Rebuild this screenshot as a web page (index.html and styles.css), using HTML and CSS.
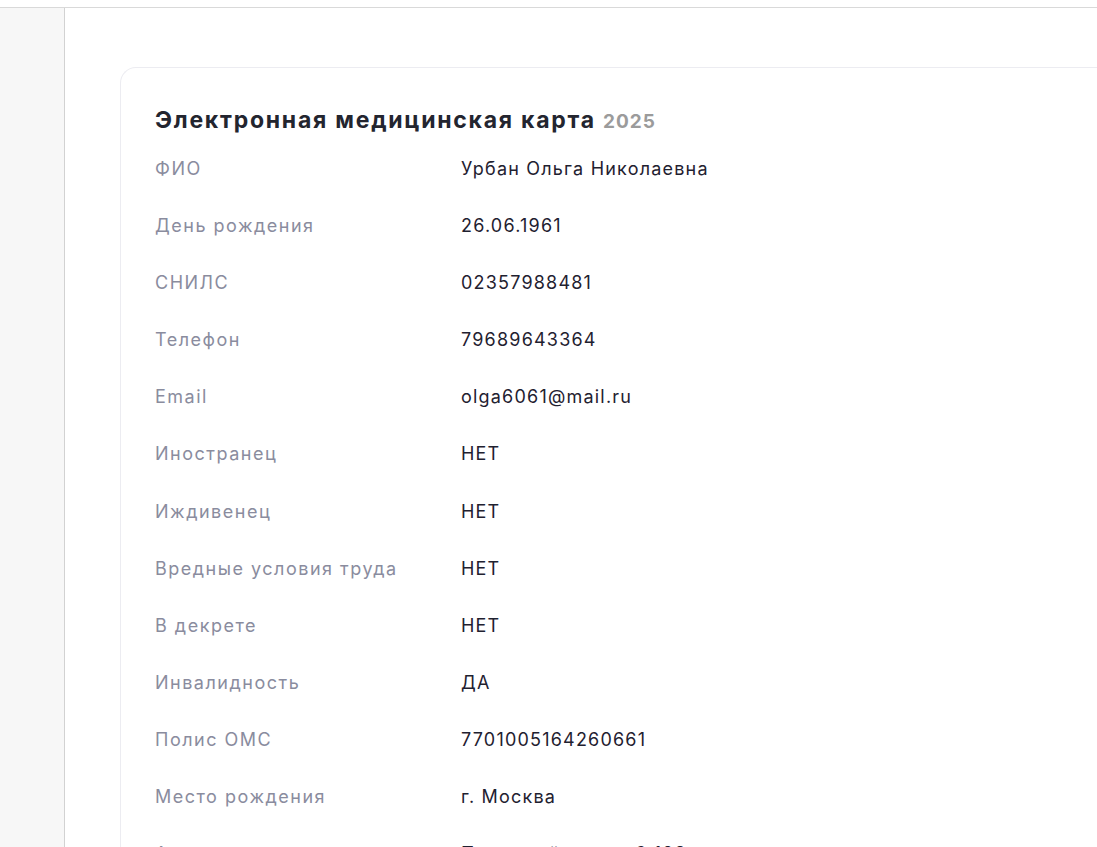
FILE: index.html
```html
<!DOCTYPE html>
<html lang="ru">
<head>
<meta charset="utf-8">
<title>Электронная медицинская карта</title>
<link rel="stylesheet" href="styles.css">
</head>
<body>
<header class="topbar"></header>
<div class="layout">
  <aside class="sidebar"></aside>
  <main class="main">
    <section class="card">
      <h1 class="card-title">Электронная медицинская карта <span class="year">2025</span></h1>
      <dl class="fields">
        <div class="row"><dt>ФИО</dt><dd>Урбан Ольга Николаевна</dd></div>
        <div class="row"><dt>День рождения</dt><dd>26.06.1961</dd></div>
        <div class="row"><dt>СНИЛС</dt><dd>02357988481</dd></div>
        <div class="row"><dt>Телефон</dt><dd>79689643364</dd></div>
        <div class="row"><dt>Email</dt><dd>olga6061@mail.ru</dd></div>
        <div class="row"><dt>Иностранец</dt><dd>НЕТ</dd></div>
        <div class="row"><dt>Иждивенец</dt><dd>НЕТ</dd></div>
        <div class="row"><dt>Вредные условия труда</dt><dd>НЕТ</dd></div>
        <div class="row"><dt>В декрете</dt><dd>НЕТ</dd></div>
        <div class="row"><dt>Инвалидность</dt><dd>ДА</dd></div>
        <div class="row"><dt>Полис ОМС</dt><dd>7701005164260661</dd></div>
        <div class="row"><dt>Место рождения</dt><dd>г. Москва</dd></div>
        <div class="row"><dt>Адрес</dt><dd>Полярный пр., д. 6 128</dd></div>
      </dl>
    </section>
  </main>
</div>
</body>
</html>
```

FILE: styles.css
```css
html, body {
  margin: 0;
  padding: 0;
  background: #ffffff;
  font-family: Inter, "Noto Sans", sans-serif;
  overflow: hidden;
}

.topbar {
  height: 7px;
  border-bottom: 1px solid #d9d9d9;
  background: #ffffff;
}

.layout {
  display: flex;
  min-height: 900px;
}

.sidebar {
  width: 64px;
  flex: 0 0 64px;
  background: #f7f7f7;
  border-right: 1px solid #d2d2d2;
}

.main {
  flex: 1;
  padding: 59px 0 0 55px;
  min-width: 0;
}

.card {
  border: 1px solid #ececf1;
  border-right: none;
  border-radius: 16px 0 0 0;
  padding: 37px 0 0 34px;
  margin-right: -20px;
}

.card-title {
  margin: 0;
  font-size: 23px;
  line-height: 30px;
  font-weight: 700;
  color: #23252f;
  letter-spacing: 1.75px;
  white-space: nowrap;
}

.year {
  color: #9b9b9b;
  font-size: 19px;
  letter-spacing: 1px;
}

.fields {
  margin: 20px 0 0 0;
}

.row {
  display: grid;
  grid-template-columns: 306px 1fr;
  height: 57.1px;
  align-items: start;
}

.row dt,
.row dd {
  margin: 0;
  font-size: 18px;
  line-height: 24px;
  letter-spacing: 1.2px;
}

.row dt {
  color: #8a8c9e;
  letter-spacing: 1.5px;
}

.row dd {
  color: #1f2130;
}
```
